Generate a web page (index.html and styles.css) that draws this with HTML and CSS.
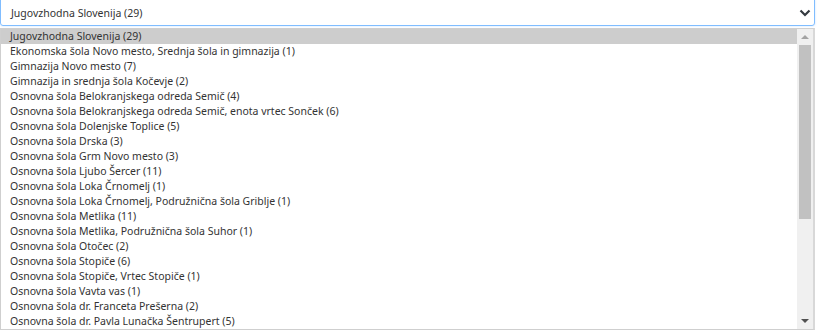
FILE: index.html
```html
<!DOCTYPE html>
<html lang="sl">
<head>
    <meta charset="UTF-8">
    <meta name="viewport" content="width=device-width, initial-scale=1.0">
    <title>Šole</title>
    <link rel="stylesheet" href="styles.css">
</head>
<body>
<div class="wrap">
    <div class="select">
        <span>Jugovzhodna Slovenija (29)</span>
        <svg class="chev" width="12" height="8" viewBox="0 0 12 8"><path d="M1.5 1.5 L6 6 L10.5 1.5" fill="none" stroke="#343a40" stroke-width="2.2"/></svg>
    </div>
    <div class="dropdown">
        <ul class="list">
            <li class="sel">Jugovzhodna Slovenija (29)</li>
            <li>Ekonomska šola Novo mesto, Srednja šola in gimnazija (1)</li>
            <li>Gimnazija Novo mesto (7)</li>
            <li>Gimnazija in srednja šola Kočevje (2)</li>
            <li>Osnovna šola Belokranjskega odreda Semič (4)</li>
            <li>Osnovna šola Belokranjskega odreda Semič, enota vrtec Sonček (6)</li>
            <li>Osnovna šola Dolenjske Toplice (5)</li>
            <li>Osnovna šola Drska (3)</li>
            <li>Osnovna šola Grm Novo mesto (3)</li>
            <li>Osnovna šola Ljubo Šercer (11)</li>
            <li>Osnovna šola Loka Črnomelj (1)</li>
            <li>Osnovna šola Loka Črnomelj, Podružnična šola Griblje (1)</li>
            <li>Osnovna šola Metlika (11)</li>
            <li>Osnovna šola Metlika, Podružnična šola Suhor (1)</li>
            <li>Osnovna šola Otočec (2)</li>
            <li>Osnovna šola Stopiče (6)</li>
            <li>Osnovna šola Stopiče, Vrtec Stopiče (1)</li>
            <li>Osnovna šola Vavta vas (1)</li>
            <li>Osnovna šola dr. Franceta Prešerna (2)</li>
            <li>Osnovna šola dr. Pavla Lunačka Šentrupert (5)</li>
        </ul>
        <div class="scroll">
            <div class="arrow up"></div>
            <div class="track"><div class="thumb"></div></div>
            <div class="arrow down"></div>
        </div>
    </div>
</div>
</body>
</html>
```
FILE: styles.css
```css
html, body {
    margin: 0;
    background: #fff;
}
.wrap {
    width: 815px;
    font-family: "Noto Sans", "Liberation Sans", sans-serif;
    font-size: 10.5px;
    color: #333;
}
.select {
    margin-top: -1px;
    height: 25px;
    border: 1px solid #80bdff;
    border-radius: 0 0 3px 3px;
    display: flex;
    align-items: center;
    justify-content: space-between;
    padding: 0 3px 0 10px;
    box-shadow: 0 0 2px rgba(128, 189, 255, .5);
}
.chev {
    margin-top: 1px;
}
.dropdown {
    margin-top: 2px;
    height: 300px;
    border: 1px solid #cfcfcf;
    border-right: 2px solid #d8d8d8;
    display: flex;
    overflow: hidden;
}
.list {
    list-style: none;
    margin: 0;
    padding: 0;
    flex: 1;
    overflow: hidden;
}
.list li {
    height: 15px;
    line-height: 15px;
    padding-left: 9px;
    white-space: nowrap;
}
.list li.sel {
    background: #cdcdcd;
}
.scroll {
    width: 16px;
    background: #f0f0f0;
    display: flex;
    flex-direction: column;
}
.arrow {
    height: 16px;
    display: flex;
    align-items: center;
    justify-content: center;
}
.arrow::before {
    content: "";
    border-left: 4px solid transparent;
    border-right: 4px solid transparent;
}
.arrow.up::before {
    border-bottom: 4px solid #a3a3a3;
}
.arrow.down::before {
    border-top: 4px solid #505050;
}
.track {
    flex: 1;
    padding: 0 2px;
}
.thumb {
    height: 174px;
    background: #c1c1c1;
}
```
